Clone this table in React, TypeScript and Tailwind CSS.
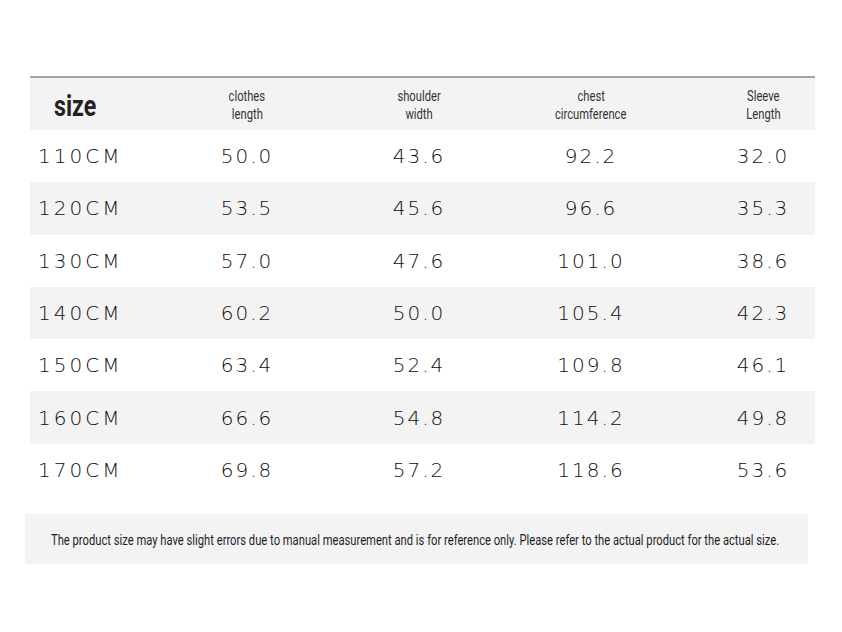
const rows = [
  ["110CM", "50.0", "43.6", "92.2", "32.0"],
  ["120CM", "53.5", "45.6", "96.6", "35.3"],
  ["130CM", "57.0", "47.6", "101.0", "38.6"],
  ["140CM", "60.2", "50.0", "105.4", "42.3"],
  ["150CM", "63.4", "52.4", "109.8", "46.1"],
  ["160CM", "66.6", "54.8", "114.2", "49.8"],
  ["170CM", "69.8", "57.2", "118.6", "53.6"],
];

const headers = [
  ["clothes", "length"],
  ["shoulder", "width"],
  ["chest", "circumference"],
  ["Sleeve", "Length"],
];

// no condensed face installed, so squeeze Roboto horizontally
const cond = "font-['Roboto',sans-serif] inline-block whitespace-nowrap scale-x-[0.8]";

export default function App() {
  return (
    <div className="w-[842px] h-[632px] bg-white pt-[76px]">
      <div className="ml-[30px] w-[785px] border-t-2 border-[#a3a3a3]">
        {/* header */}
        <div className="grid grid-cols-[131px_172px_172px_172px_138px] h-[52px] bg-[#f3f3f3] text-[#333]">
          <div className="flex items-center pl-[24px] pt-[6px]">
            <span className={`${cond} origin-left text-[29px] font-bold text-[#222]`}>size</span>
          </div>
          {headers.map((h) => (
            <div key={h[0]} className="flex justify-start">
              <div className="w-[172px] shrink-0 flex flex-col items-center justify-center text-[14px] leading-[18px] pt-[1px]">
                <span className={cond}>{h[0]}</span>
                <span className={cond}>{h[1]}</span>
              </div>
            </div>
          ))}
        </div>
        {/* rows */}
        {rows.map((r, i) => (
          <div
            key={r[0]}
            className={`grid grid-cols-[131px_172px_172px_172px_138px] h-[52.3px] items-center text-[20px] tracking-[2px] text-[#0f0f0f] font-['DejaVu_Sans',sans-serif] font-light ${i % 2 === 1 ? "bg-[#f3f3f3]" : "bg-white"}`}
          >
            <div className="pl-2 tracking-[3px]">{r[0]}</div>
            {r.slice(1).map((v, j) => (
              <div key={j} className="flex justify-start">
                <div className="w-[172px] shrink-0 text-center">{v}</div>
              </div>
            ))}
          </div>
        ))}
      </div>
      {/* note */}
      <div className="ml-[25px] mt-[18px] w-[783px] h-[50px] bg-[#f3f3f3] flex items-center pl-[26px] pt-[2px] text-[14px] text-[#1f1f1f]">
        <span className={`${cond} origin-left`}>
          The product size may have slight errors due to manual measurement and is for reference only. Please refer to the actual product for the actual size.
        </span>
      </div>
    </div>
  );
}
